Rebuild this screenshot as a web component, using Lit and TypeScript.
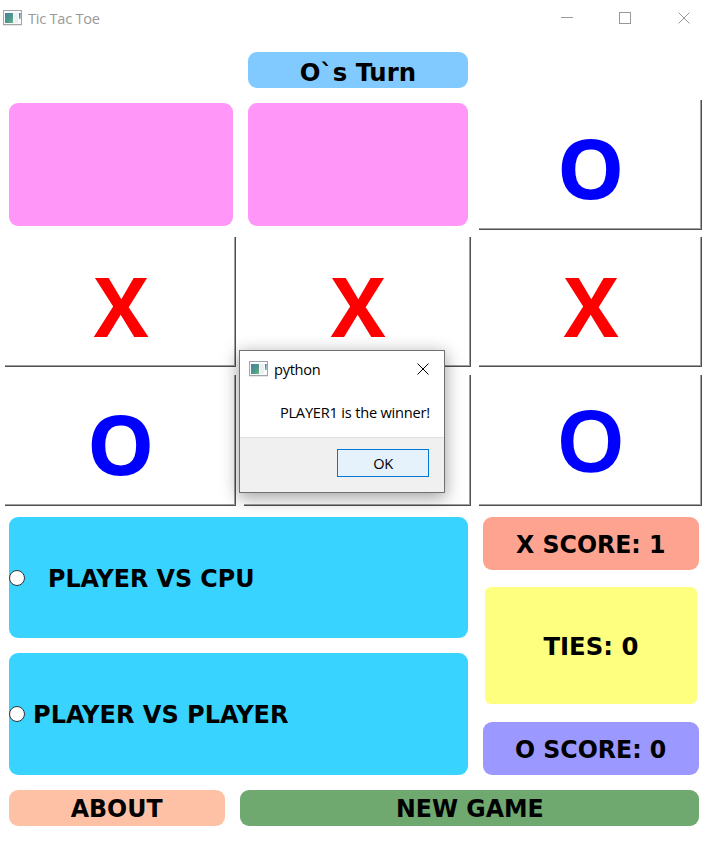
import { LitElement, html, css, svg } from "lit";
import { customElement, property } from "lit/decorators.js";

@customElement("app-icon")
class AppIcon extends LitElement {
  static styles = css`
    :host { display: block; width: 19px; height: 16px; stroke: none; }
    svg { display: block; }
  `;
  render() {
    return html`<svg width="19" height="16" viewBox="0 0 19 16">
      <defs>
        <linearGradient id="g" x1="0" y1="0" x2="1" y2="1">
          <stop offset="0" stop-color="#4a7fa0" />
          <stop offset="0.6" stop-color="#4f9a8a" />
          <stop offset="1" stop-color="#6cb583" />
        </linearGradient>
        <linearGradient id="h" x1="0" y1="0" x2="0" y2="1">
          <stop offset="0" stop-color="#4a72b4" />
          <stop offset="1" stop-color="#6cb58a" />
        </linearGradient>
      </defs>
      <rect x="0" y="15" width="19" height="1" fill="#e4e6e8" />
      <rect x="0.5" y="0.5" width="18" height="14" fill="#fafbfc" stroke="#a0a5aa" />
      <rect x="2" y="3" width="8" height="10" fill="url(#g)" />
      <rect x="11" y="3" width="4" height="10" fill="#eceff2" />
      <rect x="16" y="3" width="1.6" height="6" fill="url(#h)" />
    </svg>`;
  }
}

@customElement("game-cell")
class GameCell extends LitElement {
  @property() mark = "";
  @property({ type: Boolean }) light = false;
  static styles = css`
    :host { display: flex; }
    .cell {
      flex: 1; display: flex; align-items: center; justify-content: center; box-sizing: border-box;
      box-shadow: inset -1px -1px #505050, inset -2px -2px #a0a0a0;
      font: 700 82px/100px "Open Sans", "Noto Sans", sans-serif;
    }
    .x { color: #f00; padding: 5px 0 0 1px; }
    .o { color: #00f; padding: 4px 0 0 1px; }
    .o span { transform: scaleX(1.04); }
    .light { font-weight: 600; font-size: 83px; padding: 0 0 3px 1px; -webkit-text-stroke: 1.6px #00f; }
    .blank { flex: 1; margin: 3px 3px 4px 4px; border-radius: 9px; background: #ff96f8; }
  `;
  render() {
    if (!this.mark) return html`<div class="blank"></div>`;
    return html`<div class="cell ${this.mark === "X" ? "x" : "o"} ${this.light ? "light" : ""}"><span>${this.mark}</span></div>`;
  }
}

const cross = svg`<path d="M0.5 0.5 L11.5 11.5 M11.5 0.5 L0.5 11.5" />`;

@customElement("app-root")
class AppRoot extends LitElement {
  static styles = css`
    :host {
      display: block; position: relative; width: 714px; height: 860px; overflow: hidden;
      background: #fff; color: #000;
      font: 700 25.6px/30px "DejaVu Sans Condensed", "DejaVu Sans", sans-serif;
      font-stretch: condensed;
    }
    svg { display: block; fill: none; stroke-width: 1; }
    .titlebar { display: flex; align-items: center; height: 36px; padding-left: 3px; box-sizing: border-box; }
    .caption { font: 400 14.6px/20px "Open Sans", "Noto Sans", sans-serif; color: #999; margin-left: 6px; letter-spacing: -0.25px; flex: 1; padding-bottom: 1px; }
    .controls { display: flex; gap: 46px; margin-right: 24px; stroke: #999; }
    .close { margin-left: 1px; }
    .pill { display: flex; align-items: center; justify-content: center; border-radius: 9px; box-sizing: border-box; white-space: pre; }
    .status { width: 220px; height: 36px; margin: 16px 0 0 248px; padding-top: 3px; background: #80caff; }
    .board {
      display: grid; margin: 12px 12px 0 5px;
      grid-template-columns: 231px 227px 223px; grid-template-rows: 130px 130px 131px;
      column-gap: 8px; row-gap: 7px;
    }
    .row3 { margin-top: 1px; margin-bottom: -1px; }
    .lower { display: flex; gap: 15px; margin: 12px 15px 0 9px; height: 257.5px; }
    .modes { width: 459px; display: flex; flex-direction: column; gap: 15px; }
    .mode { flex: 1; border-radius: 9px; background: #38d4ff; display: flex; align-items: center; white-space: pre; }
    .radio { width: 16px; height: 16px; border-radius: 50%; border: 1px solid #333; background: #fff; box-sizing: border-box; }
    .mode span { margin-left: 7.5px; transform: scaleX(1.045); transform-origin: left; }
    .mode.cpu span { margin-left: 22.5px; transform: scaleX(1.033); }
    .status span, .ties span { transform: scaleX(1.057); }
    .score span, .about span, .new span { transform: scaleX(1.027); }
    .scores { width: 216px; display: flex; flex-direction: column; justify-content: space-between; }
    .score { height: 53px; }
    .xs { background: #ffa391; }
    .ties { height: 117px; margin: 0 2px; border-radius: 6px; background: #feff7e; }
    .os { background: #9b98ff; padding-top: 1px; }
    .actions { display: flex; gap: 15px; margin: 15px 15px 0 9px; height: 36.5px; }
    .about { width: 216px; background: #ffc1a6; }
    .new { flex: 1; background: #6fa970; }
    .dialog {
      position: absolute; left: 239px; top: 350px; width: 206px; height: 143px; box-sizing: border-box;
      border: 1px solid #707070; background: #fff; box-shadow: 0 4px 16px 1px rgba(0, 0, 0, 0.36);
      font: 400 14.6px/20px "Open Sans", "Noto Sans", sans-serif; display: flex; flex-direction: column;
    }
    .dhead { display: flex; align-items: center; padding: 8px 15px 0 9px; height: 28px; box-sizing: border-box; stroke: #000; }
    .dname { flex: 1; margin-left: 6px; letter-spacing: -0.3px; padding-bottom: 1px; }
    .msg { flex: 1; padding: 23px 14px 0; text-align: right; white-space: nowrap; letter-spacing: -0.2px; }
    .dfoot { height: 55px; box-sizing: border-box; border-top: 1px solid #dfdfdf; background: #f0f0f0; padding: 11px 15px 0; display: flex; justify-content: flex-end; }
    .ok { width: 92px; height: 28px; box-sizing: border-box; border: 1px solid #0078d7; background: #e5f1fb; text-align: center; line-height: 27px; letter-spacing: -0.4px; }
  `;
  cells = ["", "", "O", "X", "X", "X", "O", "", "O"];
  render() {
    return html`
      <div class="titlebar">
        <app-icon></app-icon>
        <div class="caption">Tic Tac Toe</div>
        <div class="controls">
          <svg width="12" height="12"><path d="M0 5.5H12" /></svg>
          <svg width="12" height="12"><rect x="0.5" y="0.5" width="11" height="11" /></svg>
          <svg class="close" width="12" height="12">${cross}</svg>
        </div>
      </div>
      <div class="pill status"><span>O\`s Turn</span></div>
      <div class="board">
        ${this.cells.map((m, i) => html`<game-cell class=${i > 5 ? "row3" : ""} .mark=${i === 7 ? " " : m} ?light=${i === 8}></game-cell>`)}
      </div>
      <div class="lower">
        <div class="modes">
          <div class="mode cpu"><div class="radio"></div><span>PLAYER VS CPU</span></div>
          <div class="mode"><div class="radio"></div><span>PLAYER VS PLAYER</span></div>
        </div>
        <div class="scores">
          <div class="pill score xs"><span>X SCORE: 1</span></div>
          <div class="pill ties"><span>TIES: 0</span></div>
          <div class="pill score os"><span>O SCORE: 0</span></div>
        </div>
      </div>
      <div class="actions">
        <div class="pill about"><span>ABOUT</span></div>
        <div class="pill new"><span>NEW GAME</span></div>
      </div>
      <div class="dialog">
        <div class="dhead">
          <app-icon></app-icon>
          <div class="dname">python</div>
          <svg width="12" height="12">${cross}</svg>
        </div>
        <div class="msg">PLAYER1 is the winner!</div>
        <div class="dfoot"><div class="ok">OK</div></div>
      </div>
    `;
  }
}
